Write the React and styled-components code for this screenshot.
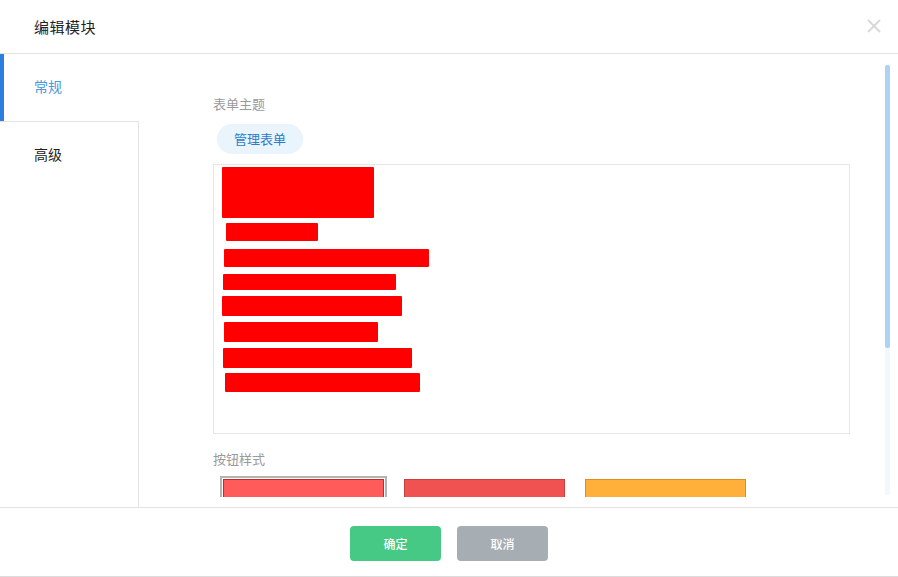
import React from "react";
import styled, { createGlobalStyle } from "styled-components";

const Global = createGlobalStyle`
  html, body { margin: 0; padding: 0; background: #fff; }
  body { font-family: "Noto Sans CJK SC", "Noto Sans", sans-serif; }
  * { box-sizing: border-box; }
`;

const Dialog = styled.div`
  width: 898px;
  height: 577px;
  display: flex;
  flex-direction: column;
  background: #fff;
  border-bottom: 1px solid #dcdcdc;
`;

const Header = styled.div`
  height: 54px;
  flex: none;
  display: flex;
  align-items: center;
  justify-content: space-between;
  padding: 0 16px 0 34px;
  border-bottom: 1px solid #e3e3e3;
`;

const Title = styled.div`
  font-size: 15px;
  font-weight: 400;
  color: #222;
  letter-spacing: 0.5px;
`;

const Close = styled.button`
  border: 0;
  background: none;
  padding: 0;
  width: 16px;
  height: 16px;
  margin-top: -1px;
  display: flex;
  align-items: center;
  justify-content: center;
`;

const Body = styled.div`
  flex: 1;
  display: flex;
  min-height: 0;
`;

const Sidebar = styled.div`
  width: 139px;
  flex: none;
  display: flex;
  flex-direction: column;
`;

const Tab = styled.div`
  height: 67px;
  flex: none;
  display: flex;
  align-items: center;
  padding-left: ${(p) => (p.$active ? "30px" : "34px")};
  padding-bottom: 3px;
  font-size: 14px;
  color: ${(p) => (p.$active ? "#4d97dc" : "#222")};
  border-left: ${(p) => (p.$active ? "4px solid #2b7fe0" : "0")};
  border-top: ${(p) => (p.$active ? "0" : "1px solid #e3e3e3")};
  border-right: ${(p) => (p.$active ? "0" : "1px solid #e3e3e3")};
`;

const SideFill = styled.div`
  flex: 1;
  border-right: 1px solid #e3e3e3;
`;

const Pane = styled.div`
  flex: 1;
  position: relative;
  padding: 10px 0 10px 0;
  display: flex;
`;

const Scroll = styled.div`
  flex: 1;
  overflow: hidden;
  padding: 31px 48px 0 74px;
`;

const Label = styled.div`
  font-size: 13px;
  line-height: 18px;
  color: #9a9a9a;
  margin-top: ${(p) => p.$top || 0}px;
`;

const Chip = styled.div`
  display: inline-flex;
  align-items: center;
  height: 30px;
  padding: 0 17px 1px;
  margin: 11px 0 10px 4px;
  border-radius: 15px;
  background: #e9f4fd;
  color: #2c7cc9;
  font-size: 13px;
`;

const Editor = styled.div`
  height: 270px;
  border: 1px solid #e6e6e6;
  padding: 2px 0 0 0;
  display: flex;
  flex-direction: column;
  align-items: flex-start;
`;

const Redact = styled.div`
  background: #ff0000;
  flex: none;
  border-radius: 1px;
`;

const Swatches = styled.div`
  display: flex;
  gap: 14px;
  margin: 8px 0 0 7px;
`;

const SwatchCell = styled.div`
  width: 167px;
  height: 30px;
  padding: 1px;
  border: 2px solid ${(p) => (p.$selected ? "#b3b3b3" : "transparent")};
  border-bottom: 0;
`;

const Swatch = styled.div`
  height: 100%;
  background: ${(p) => p.$bg};
  border: 1px solid ${(p) => p.$edge};
`;

const Track = styled.div`
  position: absolute;
  top: 11px;
  right: 8px;
  width: 5px;
  height: 430px;
  background: #f2f8fe;
  border-radius: 2px;
`;

const Thumb = styled.div`
  width: 100%;
  height: 283px;
  background: #acd3f4;
  border-radius: 2px;
`;

const Footer = styled.div`
  height: 69px;
  flex: none;
  border-top: 1px solid #e3e3e3;
  display: flex;
  justify-content: center;
  align-items: flex-start;
  padding-top: 18px;
  gap: 16px;
`;

const Btn = styled.button`
  width: 91px;
  height: 35px;
  border: 0;
  border-radius: 4px;
  background: ${(p) => p.$bg};
  color: #fff;
  font-family: "Noto Sans CJK SC", sans-serif;
  font-size: 12px;
  font-weight: 500;
`;

const bars = [
  { w: 152, h: 51, x: 8, t: 0 },
  { w: 92, h: 18, x: 12, t: 5 },
  { w: 205, h: 18, x: 10, t: 8 },
  { w: 173, h: 16, x: 9, t: 7 },
  { w: 180, h: 20, x: 8, t: 6 },
  { w: 154, h: 20, x: 10, t: 6 },
  { w: 189, h: 20, x: 9, t: 6 },
  { w: 195, h: 19, x: 11, t: 5 },
];

const swatches = [
  { bg: "#ff5b5b", edge: "#c22a2a", selected: true },
  { bg: "#f05252", edge: "#c94040" },
  { bg: "#ffb03b", edge: "#e08e1c" },
];

export default function App() {
  return (
    <>
      <Global />
      <Dialog>
        <Header>
          <Title>编辑模块</Title>
          <Close aria-label="close">
            <svg width="14" height="14" viewBox="0 0 14 14">
              <path d="M1 1L13 13M13 1L1 13" stroke="#d9d9d9" strokeWidth="2" />
            </svg>
          </Close>
        </Header>
        <Body>
          <Sidebar>
            <Tab $active>常规</Tab>
            <Tab>高级</Tab>
            <SideFill />
          </Sidebar>
          <Pane>
            <Scroll>
              <Label>表单主题</Label>
              <Chip>管理表单</Chip>
              <Editor>
                {bars.map((b, i) => (
                  <Redact
                    key={i}
                    style={{ width: b.w, height: b.h, marginLeft: b.x, marginTop: b.t }}
                  />
                ))}
              </Editor>
              <Label $top={16}>按钮样式</Label>
              <Swatches>
                {swatches.map((s, i) => (
                  <SwatchCell key={i} $selected={s.selected}>
                    <Swatch $bg={s.bg} $edge={s.edge} />
                  </SwatchCell>
                ))}
              </Swatches>
            </Scroll>
            <Track>
              <Thumb />
            </Track>
          </Pane>
        </Body>
        <Footer>
          <Btn $bg="#45c985">确定</Btn>
          <Btn $bg="#a6aeb4">取消</Btn>
        </Footer>
      </Dialog>
    </>
  );
}
